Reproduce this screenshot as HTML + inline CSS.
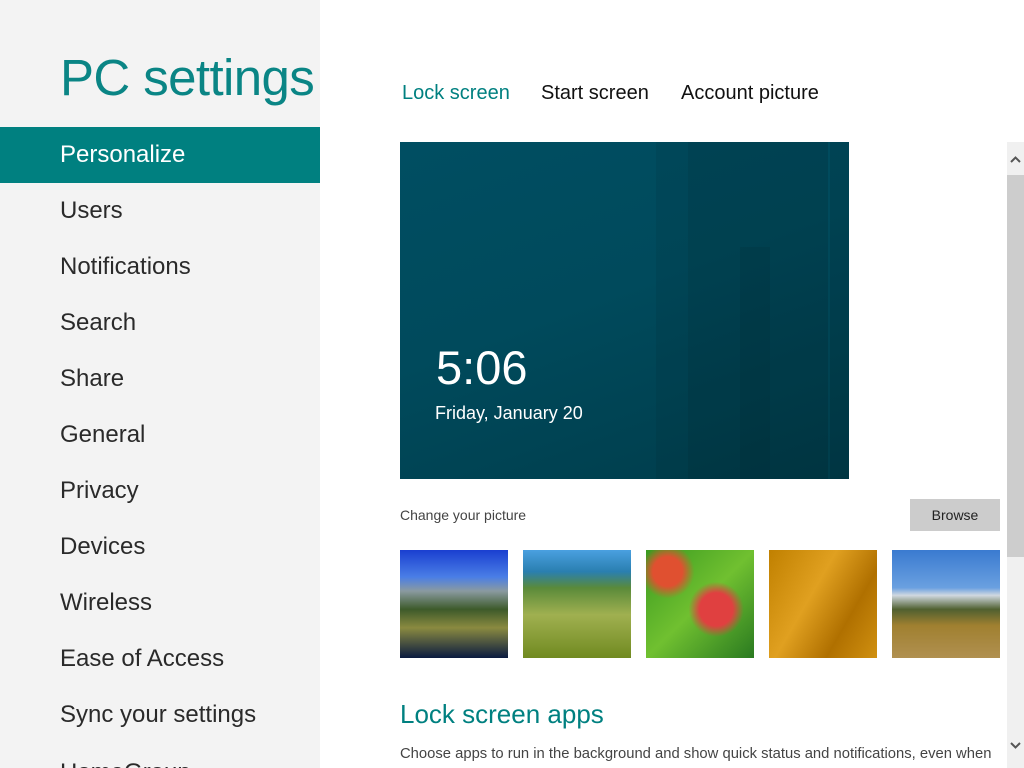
<!DOCTYPE html>
<html><head><meta charset="utf-8"><style>
*{margin:0;padding:0;box-sizing:border-box}
html,body{width:1024px;height:768px;overflow:hidden}
body{background:#fff;font-family:"Liberation Sans",sans-serif;position:relative}
.side{position:absolute;left:0;top:0;width:320px;height:768px;background:#f3f3f3;overflow:hidden}
.title{position:absolute;left:60px;top:48px;font-size:51px;color:#0a8585;font-weight:normal;letter-spacing:-0.6px;white-space:nowrap}
.nav{position:absolute;left:0;width:320px;height:56px;line-height:56px;padding-left:60px;font-size:24px;color:#2a2a2a}
.sel{background:#008080;color:#fff}
.tab{position:absolute;top:82px;font-size:20px;color:#111;white-space:nowrap}
.lock{position:absolute;left:400px;top:142px;width:449px;height:337px;overflow:hidden;
background:linear-gradient(160deg,#004e62 0%,#004a5c 45%,#003c4a 100%)}
.lock .b{position:absolute;top:0;height:100%}
.thumb{position:absolute;top:550px;width:108px;height:108px}
.sb{position:absolute;left:1007px;top:142px;width:17px;height:626px;background:#f0f0f0}
</style></head><body>
<div class="side">
<div class="title">PC settings</div>
<div class="nav sel" style="top:127px">Personalize</div>
<div class="nav" style="top:183px">Users</div>
<div class="nav" style="top:239px">Notifications</div>
<div class="nav" style="top:295px">Search</div>
<div class="nav" style="top:351px">Share</div>
<div class="nav" style="top:407px">General</div>
<div class="nav" style="top:463px">Privacy</div>
<div class="nav" style="top:519px">Devices</div>
<div class="nav" style="top:575px">Wireless</div>
<div class="nav" style="top:631px">Ease of Access</div>
<div class="nav" style="top:687px">Sync your settings</div>
<div class="nav" style="top:745px">HomeGroup</div>
</div>
<div class="tab" style="left:402px;color:#008080">Lock screen</div>
<div class="tab" style="left:541px">Start screen</div>
<div class="tab" style="left:681px">Account picture</div>
<div class="lock">
<div class="b" style="left:256px;width:32px;background:rgba(0,0,0,0.06)"></div>
<div class="b" style="left:288px;width:140px;background:rgba(0,0,0,0.12)"></div>
<div class="b" style="left:340px;top:105px;width:30px;background:rgba(0,40,50,0.15)"></div>
<div class="b" style="left:430px;width:19px;background:rgba(0,0,0,0.1)"></div>
<div style="position:absolute;left:36px;top:198px;font-size:47px;color:#fff">5:06</div>
<div style="position:absolute;left:35px;top:261px;font-size:18px;color:#fff">Friday, January 20</div>
</div>
<div style="position:absolute;left:400px;top:507px;font-size:14px;color:#444">Change your picture</div>
<div style="position:absolute;left:910px;top:499px;width:90px;height:32px;background:#cccccc;font-size:14px;color:#222;text-align:center;line-height:32px">Browse</div>
<div class="thumb" style="left:400px;background:linear-gradient(#1a3fd0 0%,#4a7ee6 25%,#8a9aa0 38%,#3d5a2a 55%,#8a8a40 72%,#0a1a40 100%)"></div>
<div class="thumb" style="left:523px;background:linear-gradient(#4aa0e0 0%,#2a7fb0 20%,#5a8a3a 35%,#a0b050 60%,#708a20 100%)"></div>
<div class="thumb" style="left:646px;background:radial-gradient(circle at 65% 55%,#e04040 0 18%,transparent 30%),radial-gradient(circle at 20% 20%,#e05030 0 12%,transparent 22%),linear-gradient(135deg,#3a9a20,#70c030,#2a7a20)"></div>
<div class="thumb" style="left:769px;background:linear-gradient(120deg,#c08000,#e0a020 40%,#b07000 70%,#d09010)"></div>
<div class="thumb" style="left:892px;background:linear-gradient(#3a7ad0 0%,#6aa0e0 35%,#d0d8e0 42%,#506030 55%,#a08030 70%,#b09050 100%)"></div>
<div style="position:absolute;left:400px;top:699px;font-size:26px;color:#008080">Lock screen apps</div>
<div style="position:absolute;left:400px;top:746px;font-size:14.8px;color:#444;white-space:nowrap">Choose apps to run in the background and show quick status and notifications, even when</div>
<div class="sb">
<div style="position:absolute;top:33px;left:0;width:17px;height:382px;background:#cdcdcd"></div>
<svg style="position:absolute;left:3px;top:14px" width="11" height="7"><path d="M1 6L5.5 1.5L10 6" stroke="#555" stroke-width="2" fill="none"/></svg>
<svg style="position:absolute;left:3px;top:600px" width="11" height="7"><path d="M1 1L5.5 5.5L10 1" stroke="#555" stroke-width="2" fill="none"/></svg>
</div>
</body></html>
